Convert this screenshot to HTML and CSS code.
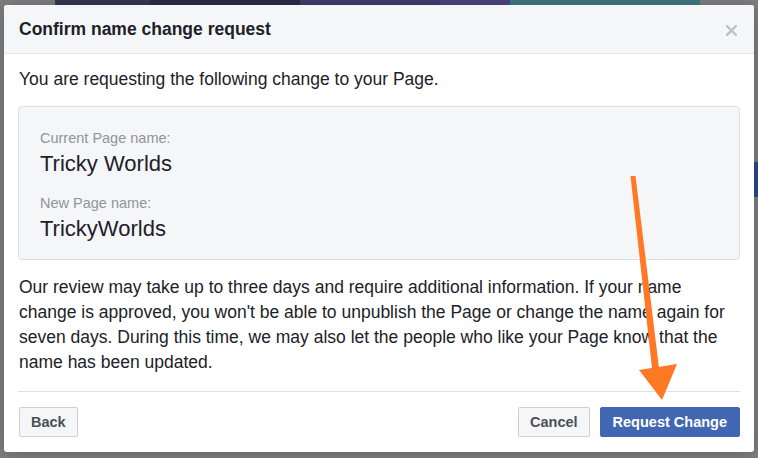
FILE: index.html
```html
<!DOCTYPE html>
<html lang="en">
<head>
    <meta charset="UTF-8">
    <meta name="viewport" content="width=device-width, initial-scale=1.0">
    <title>Confirm name change request</title>
    <link rel="stylesheet" href="styles.css">
</head>
<body>
    <div class="dialog">
        <div class="dialog-header">
            <h1>Confirm name change request</h1>
            <button class="close" title="Close">
                <svg width="11" height="11" viewBox="0 0 11 11"><path d="M1 1 L10 10 M10 1 L1 10" stroke="#bec2c9" stroke-width="2.4" stroke-linecap="square"/></svg>
            </button>
        </div>
        <div class="dialog-body">
            <p class="intro">You are requesting the following change to your Page.</p>
            <div class="names">
                <div class="name-label">Current Page name:</div>
                <div class="name-value">Tricky Worlds</div>
                <div class="name-label second">New Page name:</div>
                <div class="name-value">TrickyWorlds</div>
            </div>
            <p class="notice">Our review may take up to three days and require additional information. If your name change is approved, you won't be able to unpublish the Page or change the name again for seven days. During this time, we may also let the people who like your Page know that the name has been updated.</p>
        </div>
        <div class="dialog-footer">
            <button class="btn">Back</button>
            <div class="footer-right">
                <button class="btn">Cancel</button>
                <button class="btn btn-primary">Request Change</button>
            </div>
        </div>
    </div>

    <!-- annotation arrow drawn over the dialog -->
    <svg class="arrow" width="758" height="458" viewBox="0 0 758 458">
        <polygon points="630.5,176 635.5,176 659,368 652,368" fill="#ff7824"/>
        <polygon points="639,370 677,364 662,400" fill="#ff7824"/>
    </svg>
</body>
</html>
```

FILE: styles.css
```css
body {
    margin: 0;
    height: 458px;
    overflow: hidden;
    font-family: "Liberation Sans", Arial, Helvetica, sans-serif;
    color: #1d2129;
    background:
        linear-gradient(to right, #7f7f7f 0 55px, #3a3652 55px 150px, #2e2c48 150px 300px, #433d6c 300px 440px, #4b4680 440px 510px, #3f7a80 510px 700px, #7f7f7f 700px) top left / 100% 5px no-repeat,
        linear-gradient(#2c4a8c, #2c4a8c) right 0 top 162px / 4px 35px no-repeat,
        #7f7f7f;
}
.dialog {
    width: 750px;
    margin: 5px 4px 0;
    background: #fff;
    border-radius: 3px;
    box-shadow: 0 2px 20px rgba(0, 0, 0, 0.25);
    overflow: hidden;
}
.dialog-header {
    display: flex;
    align-items: center;
    justify-content: space-between;
    height: 48px;
    padding: 0 17px 0 15px;
    background: #f5f6f7;
    border-bottom: 1px solid #e5e5e5;
}
.dialog-header h1 {
    margin: 0;
    font-size: 17.5px;
    font-weight: bold;
    color: #1d2129;
    padding-top: 1px;
}
.close {
    border: none;
    background: none;
    padding: 0;
    width: 11px;
    height: 11px;
    margin-top: 2px;
    display: flex;
}
.dialog-body {
    padding: 13px 14px 0;
}
.dialog-body p {
    margin: 0;
    font-size: 17.5px;
    line-height: 25px;
    padding-left: 1px;
}
.names {
    margin-top: 14px;
    padding: 22px 21px 17px;
    background: #f5f6f7;
    border: 1px solid #dddfe2;
    border-radius: 4px;
}
.name-label {
    font-size: 14.5px;
    line-height: 18px;
    color: #90949c;
}
.name-label.second {
    margin-top: 17px;
}
.name-value {
    margin-top: 4px;
    font-size: 22px;
    line-height: 26px;
    color: #1d2129;
}
.dialog-body .notice {
    margin-top: 15px;
    padding-right: 12px;
}
.dialog-footer {
    display: flex;
    justify-content: space-between;
    margin: 16px 14px 0;
    padding: 15px 0 15px 1px;
    border-top: 1px solid #dddfe2;
}
.footer-right {
    display: flex;
    gap: 10px;
}
.btn {
    height: 30px;
    padding: 0 11px;
    font-family: inherit;
    font-size: 14.5px;
    font-weight: bold;
    color: #4b4f56;
    background: #f5f6f7;
    border: 1px solid #ced0d4;
    border-radius: 2px;
}
.btn-primary {
    padding: 0 12px;
    color: #fff;
    background: #4267b2;
    border-color: #4267b2;
}
.arrow {
    position: absolute;
    top: 0;
    left: 0;
}
```
